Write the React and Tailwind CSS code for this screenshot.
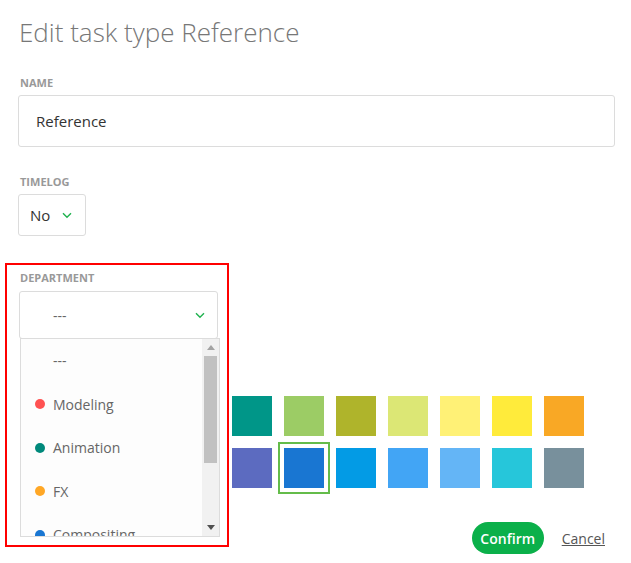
import React from "react";

const row1 = ["#009688", "#9ccc65", "#afb42b", "#dce775", "#fff176", "#ffeb3b", "#f9a825"];
const row2 = ["#5c6bc0", "#1976d2", "#039be5", "#42a5f5", "#64b5f6", "#26c6da", "#78909c"];
const hidden1 = ["#000000", "#e53935", "#ef5350", "#ab47bc"];
const hidden2 = ["#7e57c2", "#8d6e63", "#3f51b5", "#7986cb"];

function Chevron({ className }) {
  return (
    <svg className={className} width="10" height="7" viewBox="0 0 10 7" fill="none">
      <polyline points="1,1.2 5,5.2 9,1.2" stroke="#1fb24f" strokeWidth="1.4" />
    </svg>
  );
}

function Swatch({ color, selected }) {
  return (
    <div
      className={
        "w-[52px] h-[52px] flex items-center justify-center " +
        (selected ? "border-2 border-[#64bc4a]" : "")
      }
    >
      <div className="w-[40px] h-[40px]" style={{ background: color }} />
    </div>
  );
}

export default function App() {
  const items = [
    { label: "---", dot: null },
    { label: "Modeling", dot: "#ff5252" },
    { label: "Animation", dot: "#00897b" },
    { label: "FX", dot: "#ffa726" },
    { label: "Compositing", dot: "#1976d2" },
  ];
  return (
    <div className="relative w-[631px] h-[563px] bg-white overflow-hidden font-['Open_Sans',sans-serif] text-[#333]">
      <div className="pl-[18px] pr-[16px] pt-[14px]">
        <h1 className="text-[26px] leading-[36px] font-light text-[#777] pl-[1px]">Edit task type Reference</h1>

        <div className="mt-[26px] text-[11px] leading-[14px] font-bold text-[#999] pl-[2px]">NAME</div>
        <div className="mt-[5px] h-[52px] border border-[#dcdcdc] rounded-[3px] flex items-center pl-[17px] text-[15px] text-[#333]">
          Reference
        </div>

        <div className="mt-[28px] text-[11px] leading-[14px] font-bold text-[#999] pl-[2px]">TIMELOG</div>
        <div className="mt-[5px] w-[68px] h-[42px] border border-[#dcdcdc] rounded-[3px] flex items-center pl-[11px] gap-[12px] text-[15px] text-[#333]">
          <span>No</span>
          <Chevron />
        </div>

        <div className="mt-[35px] text-[11px] leading-[14px] font-bold text-[#999] pl-[2px]">DEPARTMENT</div>
        <div className="mt-[6px] ml-[1px] w-[199px] h-[48px] border border-[#dcdcdc] rounded-[3px] flex items-center justify-between pl-[33px] pr-[12px] text-[14px] text-[#666]">
          <span>---</span>
          <Chevron />
        </div>

        <div className="mt-[51px] flex flex-col gap-0">
          <div className="flex">
            {hidden1.concat(row1).map((c, i) => (
              <Swatch key={i} color={c} />
            ))}
          </div>
          <div className="flex">
            {hidden2.concat(row2).map((c, i) => (
              <Swatch key={i} color={c} selected={i === 5} />
            ))}
          </div>
        </div>

        <div className="mt-[28px] flex justify-end items-center gap-[18px] pr-[10px]">
          <button className="h-[32px] w-[72px] rounded-full bg-[#0bb04a] text-white text-[14px] font-semibold">
            Confirm
          </button>
          <span className="text-[14px] text-[#555] underline">Cancel</span>
        </div>
      </div>

      {/* Dropdown list overlay */}
      <div className="absolute left-[20px] top-[338px] w-[200px] h-[199px] border border-[#dcdcdc] bg-[#fdfdfd] flex">
        <div className="flex-1 overflow-hidden">
          {items.map((it, i) => (
            <div key={i} className="h-[43.5px] flex items-center pl-[14px] text-[14px] text-[#666]">
              <span className="w-[10px] h-[10px] rounded-full mr-[8px]" style={{ background: it.dot || "transparent" }} />
              <span>{it.label}</span>
            </div>
          ))}
        </div>
        <div className="w-[17px] bg-[#f1f1f1] flex flex-col items-center">
          <div className="h-[17px] flex items-center justify-center">
            <svg width="8" height="5" viewBox="0 0 8 5"><polygon points="0,5 8,5 4,0" fill="#a3a3a3" /></svg>
          </div>
          <div className="w-[13px] h-[107px] bg-[#c1c1c1]" />
          <div className="flex-1" />
          <div className="h-[17px] flex items-center justify-center">
            <svg width="8" height="5" viewBox="0 0 8 5"><polygon points="0,0 8,0 4,5" fill="#505050" /></svg>
          </div>
        </div>
      </div>

      {/* Red annotation box */}
      <div className="absolute left-[5px] top-[263px] w-[224px] h-[284px] border-2 border-[#ff0000] pointer-events-none" />
    </div>
  );
}
